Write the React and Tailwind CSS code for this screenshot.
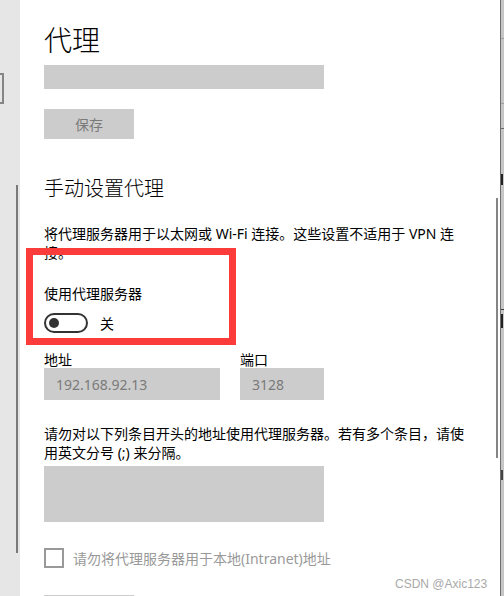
export default function App() {
  const font = { fontFamily: '"Noto Sans", "Noto Sans CJK SC", sans-serif' };
  return (
    <div
      className="relative flex h-[596px] w-[504px] overflow-hidden bg-white text-[14px] text-black"
      style={font}
    >
      {/* left strip */}
      <div className="relative h-full w-[20px] shrink-0 bg-[#e6e6e6]">
        <div className="absolute left-[-20px] top-[73px] h-[31px] w-[24px] border-2 border-[#858585]" />
        <div className="absolute left-[16px] top-[185px] h-[368px] w-[2px] bg-[#7a7a7a]" />
      </div>

      {/* main panel */}
      <div className="relative h-full w-[480px] shrink-0 bg-white pl-[24px] pt-[22px]">
        <div className="text-[28px] font-light leading-[36px]">代理</div>
        <div className="mt-[7px] h-[24px] w-[280px] bg-[#cccccc]" />
        <div className="mt-[20px] flex h-[30px] w-[90px] items-center justify-center bg-[#cccccc] text-[#7a7a7a] leading-[19px]">
          保存
        </div>

        <div className="mt-[36px] text-[20px] font-light leading-[28px]">手动设置代理</div>

        <div className="mt-[21px] leading-[19px]">
          <div className="whitespace-nowrap">将代理服务器用于以太网或 Wi-Fi 连接。这些设置不适用于 VPN 连</div>
          <div className="whitespace-nowrap">接。</div>
        </div>

        <div className="mt-[22px] leading-[19px]">使用代理服务器</div>
        <div className="mt-[10px] flex items-center">
          <div className="flex h-[20px] w-[44px] items-center rounded-full border-2 border-[#333333]">
            <div className="ml-[3px] h-[10px] w-[10px] rounded-full bg-[#333333]" />
          </div>
          <span className="ml-[12px] leading-[19px]">关</span>
        </div>

        <div className="mt-[18px] flex gap-[20px]">
          <div className="flex w-[176px] flex-col">
            <div className="leading-[17px]">地址</div>
            <div className="flex h-[32px] items-center bg-[#cccccc] pl-[12px] text-[#7a7a7a]">192.168.92.13</div>
          </div>
          <div className="flex w-[84px] flex-col">
            <div className="leading-[17px]">端口</div>
            <div className="flex h-[32px] items-center bg-[#cccccc] pl-[12px] text-[#7a7a7a]">3128</div>
          </div>
        </div>

        <div className="mt-[24px] leading-[19px]">
          <div className="whitespace-nowrap">请勿对以下列条目开头的地址使用代理服务器。若有多个条目，请使</div>
          <div className="whitespace-nowrap">用英文分号 (;) 来分隔。</div>
        </div>

        <div className="mt-[4px] h-[56px] w-[280px] bg-[#cccccc]" />

        <div className="mt-[26px] flex items-center">
          <div className="h-[20px] w-[20px] border-2 border-[#999999]" />
          <span className="ml-[9px] leading-[19px] text-[#999999]">请勿将代理服务器用于本地(Intranet)地址</span>
        </div>

        <div className="mt-[27px] h-[30px] w-[90px] bg-[#cccccc]" />

        {/* scrollbar thumb */}
        <div className="absolute left-[476px] top-[198px] h-[260px] w-[2px] bg-[#858585]" />

        {/* red annotation box */}
        <div className="absolute left-[6px] top-[248px] h-[97px] w-[210px] border-[7px] border-[#fc3b3b]" />
      </div>

      {/* right edge */}
      <div className="relative h-full w-[4px] shrink-0 border-l border-[#6f6f6f] bg-[#c6c6c6]">
        <div className="absolute left-0 top-[38px] h-[1px] w-full bg-[#a0a0a0]" />
        <div className="absolute left-0 top-[103px] h-[1px] w-full bg-[#a0a0a0]" />
        <div className="absolute left-0 top-[128px] h-[1px] w-full bg-[#6a6a6a]" />
        <div className="absolute left-0 top-[309px] h-[1px] w-full bg-[#3a3a3a]" />
        <div className="absolute left-0 top-[174px] h-[11px] w-[2px] bg-[#222222]" />
        <div className="absolute left-0 top-[314px] h-[14px] w-[2px] bg-[#222222]" />
        <div className="absolute left-0 top-[470px] h-[10px] w-[2px] bg-[#444444]" />
      </div>

      {/* watermark */}
      <div
        className="absolute left-[395px] top-[575px] whitespace-nowrap text-[12px] leading-[18px] text-[#a9a9a9]"
        style={{ fontFamily: '"Liberation Sans", sans-serif' }}
      >
        CSDN @Axic123
      </div>
    </div>
  );
}
